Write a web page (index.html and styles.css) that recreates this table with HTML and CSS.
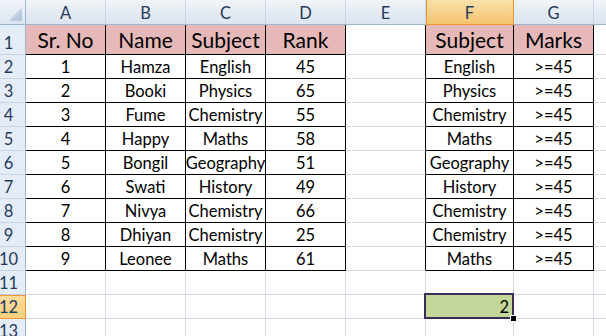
FILE: index.html
```html
<!DOCTYPE html>
<html>
<head>
<meta charset="utf-8">
<link rel="stylesheet" href="styles.css">
</head>
<body>
<div class="sheet">
  <div class="corner"><span class="tri"></span></div>
  <div class="ch">A</div><div class="ch">B</div><div class="ch">C</div><div class="ch">D</div><div class="ch">E</div><div class="ch on">F</div><div class="ch">G</div><div class="ch"></div>

  <div class="rh">1</div>
  <div class="c t hd">Sr. No</div><div class="c t hd">Name</div><div class="c t hd">Subject</div><div class="c t hd">Rank</div><div class="c e"></div><div class="c t hd">Subject</div><div class="c t hd">Marks</div><div class="c"></div>

  <div class="rh">2</div>
  <div class="c t">1</div><div class="c t">Hamza</div><div class="c t">English</div><div class="c t">45</div><div class="c e"></div><div class="c t">English</div><div class="c t">&gt;=45</div><div class="c"></div>

  <div class="rh">3</div>
  <div class="c t">2</div><div class="c t">Booki</div><div class="c t">Physics</div><div class="c t">65</div><div class="c e"></div><div class="c t">Physics</div><div class="c t">&gt;=45</div><div class="c"></div>

  <div class="rh">4</div>
  <div class="c t">3</div><div class="c t">Fume</div><div class="c t">Chemistry</div><div class="c t">55</div><div class="c e"></div><div class="c t">Chemistry</div><div class="c t">&gt;=45</div><div class="c"></div>

  <div class="rh">5</div>
  <div class="c t">4</div><div class="c t">Happy</div><div class="c t">Maths</div><div class="c t">58</div><div class="c e"></div><div class="c t">Maths</div><div class="c t">&gt;=45</div><div class="c"></div>

  <div class="rh">6</div>
  <div class="c t">5</div><div class="c t">Bongil</div><div class="c t">Geography</div><div class="c t">51</div><div class="c e"></div><div class="c t">Geography</div><div class="c t">&gt;=45</div><div class="c"></div>

  <div class="rh">7</div>
  <div class="c t">6</div><div class="c t">Swati</div><div class="c t">History</div><div class="c t">49</div><div class="c e"></div><div class="c t">History</div><div class="c t">&gt;=45</div><div class="c"></div>

  <div class="rh">8</div>
  <div class="c t">7</div><div class="c t">Nivya</div><div class="c t">Chemistry</div><div class="c t">66</div><div class="c e"></div><div class="c t">Chemistry</div><div class="c t">&gt;=45</div><div class="c"></div>

  <div class="rh">9</div>
  <div class="c t">8</div><div class="c t">Dhiyan</div><div class="c t">Chemistry</div><div class="c t">25</div><div class="c e"></div><div class="c t">Chemistry</div><div class="c t">&gt;=45</div><div class="c"></div>

  <div class="rh">10</div>
  <div class="c t">9</div><div class="c t">Leonee</div><div class="c t">Maths</div><div class="c t">61</div><div class="c e"></div><div class="c t">Maths</div><div class="c t">&gt;=45</div><div class="c"></div>

  <div class="rh">11</div>
  <div class="c"></div><div class="c"></div><div class="c"></div><div class="c"></div><div class="c"></div><div class="c"></div><div class="c"></div><div class="c"></div>

  <div class="rh on">12</div>
  <div class="c"></div><div class="c"></div><div class="c"></div><div class="c"></div><div class="c"></div><div class="c sel">2</div><div class="c"></div><div class="c"></div>

  <div class="rh">13</div>
  <div class="c"></div><div class="c"></div><div class="c"></div><div class="c"></div><div class="c"></div><div class="c"></div><div class="c"></div><div class="c"></div>
</div>
</body>
</html>
```

FILE: styles.css
```css
html, body {
  margin: 0;
  padding: 0;
  background: #ffffff;
}

body {
  font-family: Lato, "Liberation Sans", sans-serif;
  width: 606px;
  height: 336px;
  overflow: hidden;
}

.sheet {
  display: grid;
  grid-template-columns: 26px 80px 80px 80px 80px 80px 88px 80px 80px;
  grid-template-rows: 25px 30px repeat(12, 24px);
  width: 606px;
  height: 336px;
  overflow: hidden;
}

.corner {
  box-sizing: border-box;
  background: linear-gradient(to bottom, #eef3f9, #dde6f1);
  border-right: 1px solid #9eb6ce;
  border-bottom: 1px solid #9eb6ce;
  display: flex;
  align-items: flex-end;
  justify-content: flex-end;
  padding: 0 3px 3px 0;
}

.tri {
  width: 14px;
  height: 14px;
  background: linear-gradient(135deg, transparent 50%, #c3d2e4 50%, #aebfd5 100%);
}

.ch {
  box-sizing: border-box;
  background: linear-gradient(to bottom, #f2f6fa 0%, #e6ecf4 45%, #dbe4ef 100%);
  border-right: 1px solid #c9d6e5;
  border-bottom: 1px solid #9eb6ce;
  display: flex;
  align-items: center;
  justify-content: center;
  font-size: 16.5px;
  color: #1f3b5c;
  padding-top: 1px;
}

.ch.on {
  background: linear-gradient(to bottom, #fbe1ab 0%, #f7d28c 50%, #f3c56d 100%);
  border-right: 1px solid #f29536;
  border-bottom: 1px solid #f29536;
  box-shadow: inset 1px 0 0 #f29536;
}

.rh {
  box-sizing: border-box;
  background: #e4ecf7;
  border-right: 1px solid #9eb6ce;
  border-bottom: 1px solid #c5d3e3;
  display: flex;
  align-items: flex-end;
  justify-content: center;
  padding: 0 8px 1px 0;
  font-size: 16.5px;
  color: #1f3b5c;
}

.rh.on {
  background: linear-gradient(to bottom, #fcdca0, #f9cf7f);
  border-right: 1px solid #f29536;
  border-bottom: 1px solid #f29536;
  box-shadow: inset 0 1px 0 #f29536;
}

.c {
  box-sizing: border-box;
  border-right: 1px solid #d0d7e5;
  border-bottom: 1px solid #d0d7e5;
  display: flex;
  align-items: flex-end;
  justify-content: center;
  padding-bottom: 1px;
  font-size: 16.5px;
  color: #000;
  white-space: nowrap;
}

.c.t {
  border-right-color: #000;
  border-bottom-color: #000;
}

.c.e {
  border-right-color: #000;
}

.c.hd {
  background: #e6b9b8;
  font-size: 21px;
  padding-bottom: 2px;
}

.c.sel {
  position: relative;
  background: #c4d79b;
  justify-content: flex-end;
  padding-right: 4px;
}

.c.sel::before {
  content: "";
  position: absolute;
  left: -2px;
  top: -2px;
  right: -1px;
  bottom: -1px;
  border: 2px solid #3b2d57;
}

.c.sel::after {
  content: "";
  position: absolute;
  right: -3px;
  bottom: -3px;
  width: 5px;
  height: 5px;
  background: #000;
  box-shadow: 0 0 0 1px #fff;
}
```
